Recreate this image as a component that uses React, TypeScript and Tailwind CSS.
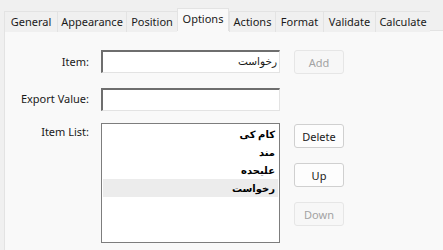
import React from 'react';

const tabs = [
  { label: 'General', w: 53 },
  { label: 'Appearance', w: 69 },
  { label: 'Position', w: 51 },
  { label: 'Options', w: 52, active: true },
  { label: 'Actions', w: 46 },
  { label: 'Format', w: 48 },
  { label: 'Validate', w: 52 },
  { label: 'Calculate', w: 55 },
];

const items = ['کام کی', 'مند', 'علیحده', 'رخواست'];

function Btn({ children, disabled }: { children: React.ReactNode; disabled?: boolean }) {
  return (
    <button
      className={
        disabled
          ? 'w-[50px] h-[24px] rounded-[3px] border border-[#e6e6e6] bg-[#f7f7f7] text-[#a3a3a3] text-[11px] leading-none'
          : 'w-[50px] h-[24px] rounded-[3px] border border-[#d0d0d0] bg-[#fdfdfd] text-[#1a1a1a] text-[11px] leading-none'
      }
    >
      {children}
    </button>
  );
}

export default function App() {
  return (
    <div
      className="w-[443px] h-[250px] bg-[#f0f0f0] pt-[8px] pl-[4px] flex flex-col overflow-hidden text-[#1a1a1a]"
      style={{ fontFamily: '"Noto Sans", "DejaVu Sans", sans-serif' }}
    >
      {/* Tabs */}
      <div className="flex items-end h-[23px] relative z-10">
        {tabs.map((t) =>
          t.active ? (
            <div
              key={t.label}
              className="h-[23px] bg-[#f9f9f9] border-l border-r border-t border-[#e3e3e3] flex items-start justify-center pt-[2px] text-[11px]"
              style={{ width: t.w }}
            >
              {t.label}
            </div>
          ) : (
            <div
              key={t.label}
              className="h-[21px] bg-[#f0f0f0] border-l border-t border-[#e3e3e3] -mb-px flex items-center justify-center text-[11px]"
              style={{ width: t.w }}
            >
              {t.label}
            </div>
          )
        )}
      </div>

      {/* Panel */}
      <div className="flex-1 bg-[#f9f9f9] border-l border-t border-[#e3e3e3] -mt-px pt-[19px] pl-[1px]">
        <div className="grid grid-cols-[83px_179px_50px] gap-x-[12px] text-[11px]">
          <div className="h-[24px] flex items-center justify-end">Item:</div>
          <div
            dir="rtl"
            className="h-[23px] bg-white border-t-2 border-l-2 border-t-[#6e6e6e] border-l-[#6e6e6e] border-b border-r border-b-[#e3e3e3] border-r-[#e3e3e3] flex items-center pr-[2px] text-[10.5px]"
          >
            رخواست
          </div>
          <div className="ml-[2px]">
            <Btn disabled>Add</Btn>
          </div>

          <div className="h-[23px] mt-[14px] flex items-center justify-end">Export Value:</div>
          <div className="h-[23px] mt-[14px] bg-white border-t-2 border-l-2 border-t-[#6e6e6e] border-l-[#6e6e6e] border-b border-r border-b-[#e3e3e3] border-r-[#e3e3e3]" />
          <div className="mt-[14px]" />

          <div className="mt-[12px] pt-[1px] text-right">Item List:</div>
          <div className="mt-[12px] h-[120px] bg-white border border-[#7d7d7d] pt-[1px] px-[1px]">
            {items.map((it, i) => (
              <div
                key={it}
                dir="rtl"
                className={
                  'h-[18px] flex items-center pr-[3px] font-bold text-[10px] text-black ' +
                  (i === 3 ? 'bg-[#ececec]' : '')
                }
              >
                {it}
              </div>
            ))}
          </div>
          <div className="mt-[13px] ml-[2px] flex flex-col gap-[15px]">
            <Btn>Delete</Btn>
            <Btn>Up</Btn>
            <Btn disabled>Down</Btn>
          </div>
        </div>
      </div>
    </div>
  );
}
